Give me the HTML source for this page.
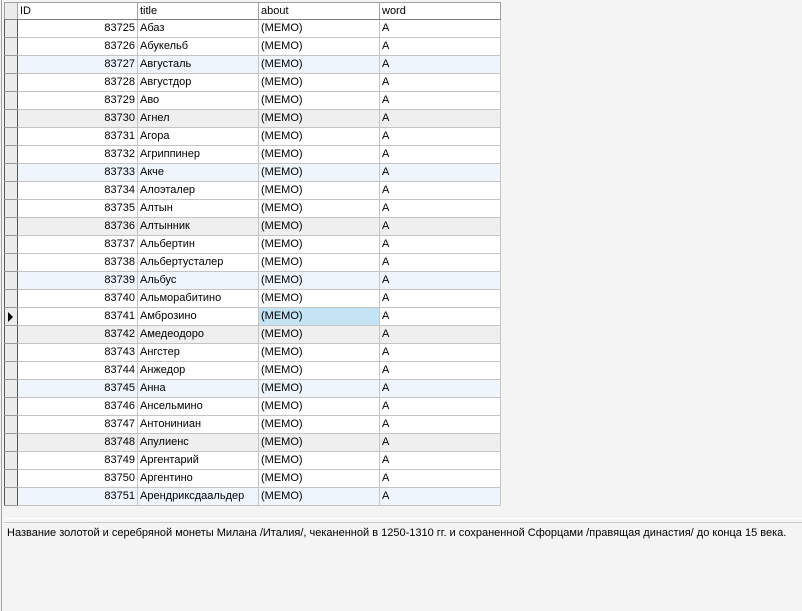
<!DOCTYPE html><html><head><meta charset="utf-8"><style>
body{margin:0;width:802px;height:611px;background:#f4f4f4;font-family:"Liberation Sans",sans-serif;font-size:11px;color:#000;position:relative;overflow:hidden}
.l{position:absolute;left:1px;top:0;width:1px;height:611px;background:#a0a0a0}
table{position:absolute;left:4px;top:2px;border-collapse:collapse;table-layout:fixed}
td{height:17px;padding:0 2px;border:1px solid #c4c4c4;white-space:nowrap;overflow:hidden;line-height:17px;background:#fff}
tr.h td{height:16px;line-height:16px;background:#fff;border-color:#a0a0a0;border-bottom:1px solid #808080}
td.i{background:#ececec;border-left:1px solid #555;border-right:1px solid #555;border-top:1px solid #fff;border-bottom:1px solid #999;padding:0;position:relative}
td.n{text-align:right}
tr.b td{background:#eef5fd}tr.g td{background:#efefef}
tr td.i{background:#ececec}
td.s{background:#c4e4f4!important}
.ar{position:absolute;left:3px;top:4px;width:0;height:0;border-left:5px solid #000;border-top:5px solid transparent;border-bottom:5px solid transparent}
.m{position:absolute;left:4px;top:522px;right:0;bottom:0;border-top:1px solid #c8c8c8;padding:4px 3px}
.m2{position:absolute;left:4px;top:518px;right:0;height:1px;background:#fff}
</style></head><body><div class="l"></div>
<table>
<colgroup><col style="width:13px"><col style="width:120px"><col style="width:121px"><col style="width:121px"><col style="width:121px"></colgroup>
<tr class="h"><td class="i"></td><td>ID</td><td>title</td><td>about</td><td>word</td></tr>
<tr><td class="i"></td><td class="n">83725</td><td>Абаз</td><td>(MEMO)</td><td>A</td></tr>
<tr><td class="i"></td><td class="n">83726</td><td>Абукельб</td><td>(MEMO)</td><td>A</td></tr>
<tr class="b"><td class="i"></td><td class="n">83727</td><td>Августаль</td><td>(MEMO)</td><td>A</td></tr>
<tr><td class="i"></td><td class="n">83728</td><td>Августдор</td><td>(MEMO)</td><td>A</td></tr>
<tr><td class="i"></td><td class="n">83729</td><td>Аво</td><td>(MEMO)</td><td>A</td></tr>
<tr class="g"><td class="i"></td><td class="n">83730</td><td>Агнел</td><td>(MEMO)</td><td>A</td></tr>
<tr><td class="i"></td><td class="n">83731</td><td>Агора</td><td>(MEMO)</td><td>A</td></tr>
<tr><td class="i"></td><td class="n">83732</td><td>Агриппинер</td><td>(MEMO)</td><td>A</td></tr>
<tr class="b"><td class="i"></td><td class="n">83733</td><td>Акче</td><td>(MEMO)</td><td>A</td></tr>
<tr><td class="i"></td><td class="n">83734</td><td>Алоэталер</td><td>(MEMO)</td><td>A</td></tr>
<tr><td class="i"></td><td class="n">83735</td><td>Алтын</td><td>(MEMO)</td><td>A</td></tr>
<tr class="g"><td class="i"></td><td class="n">83736</td><td>Алтынник</td><td>(MEMO)</td><td>A</td></tr>
<tr><td class="i"></td><td class="n">83737</td><td>Альбертин</td><td>(MEMO)</td><td>A</td></tr>
<tr><td class="i"></td><td class="n">83738</td><td>Альбертусталер</td><td>(MEMO)</td><td>A</td></tr>
<tr class="b"><td class="i"></td><td class="n">83739</td><td>Альбус</td><td>(MEMO)</td><td>A</td></tr>
<tr><td class="i"></td><td class="n">83740</td><td>Альморабитино</td><td>(MEMO)</td><td>A</td></tr>
<tr><td class="i"><div class="ar"></div></td><td class="n">83741</td><td>Амброзино</td><td class="s">(MEMO)</td><td>A</td></tr>
<tr class="g"><td class="i"></td><td class="n">83742</td><td>Амедеодоро</td><td>(MEMO)</td><td>A</td></tr>
<tr><td class="i"></td><td class="n">83743</td><td>Ангстер</td><td>(MEMO)</td><td>A</td></tr>
<tr><td class="i"></td><td class="n">83744</td><td>Анжедор</td><td>(MEMO)</td><td>A</td></tr>
<tr class="b"><td class="i"></td><td class="n">83745</td><td>Анна</td><td>(MEMO)</td><td>A</td></tr>
<tr><td class="i"></td><td class="n">83746</td><td>Ансельмино</td><td>(MEMO)</td><td>A</td></tr>
<tr><td class="i"></td><td class="n">83747</td><td>Антониниан</td><td>(MEMO)</td><td>A</td></tr>
<tr class="g"><td class="i"></td><td class="n">83748</td><td>Апулиенс</td><td>(MEMO)</td><td>A</td></tr>
<tr><td class="i"></td><td class="n">83749</td><td>Аргентарий</td><td>(MEMO)</td><td>A</td></tr>
<tr><td class="i"></td><td class="n">83750</td><td>Аргентино</td><td>(MEMO)</td><td>A</td></tr>
<tr class="b"><td class="i"></td><td class="n">83751</td><td>Арендриксдаальдер</td><td>(MEMO)</td><td>A</td></tr>
</table>
<div class="m2"></div>
<div class="m">Название золотой и серебряной монеты Милана /Италия/, чеканенной в 1250-1310 гг. и сохраненной Сфорцами /правящая династия/ до конца 15 века.</div>
</body></html>
